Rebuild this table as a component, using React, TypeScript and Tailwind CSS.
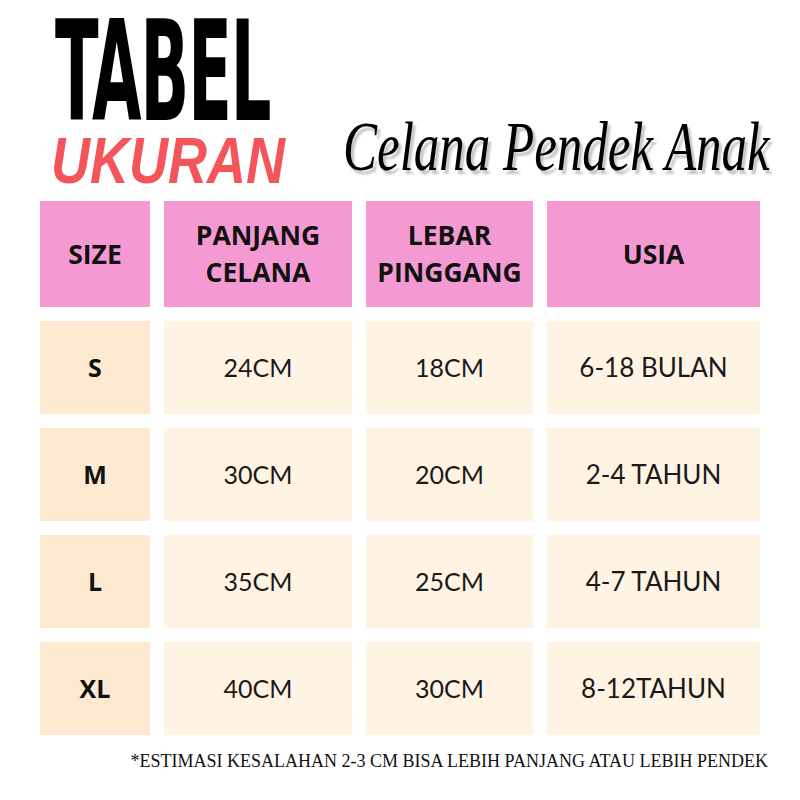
import React from 'react';

const rows = [
  { size: 'S', panjang: '24CM', lebar: '18CM', usia: '6-18 BULAN' },
  { size: 'M', panjang: '30CM', lebar: '20CM', usia: '2-4 TAHUN' },
  { size: 'L', panjang: '35CM', lebar: '25CM', usia: '4-7 TAHUN' },
  { size: 'XL', panjang: '40CM', lebar: '30CM', usia: '8-12TAHUN' },
];

const headers = ['SIZE', 'PANJANG\nCELANA', 'LEBAR\nPINGGANG', 'USIA'];

export default function App() {
  return (
    <div className="w-[800px] h-[800px] bg-white overflow-hidden">
      {/* title */}
      <div className="h-[201px] flex">
        <div className="pl-[55px] pt-[2px] w-[300px]">
          <div className="font-['Liberation_Sans_Narrow','DejaVu_Sans_Condensed',sans-serif] text-[71px] leading-none font-bold text-black origin-top-left scale-y-[1.97] tracking-[-1px]">
            TABEL
          </div>
          <div className="mt-[55px] font-['Liberation_Sans',Arial,sans-serif] text-[54px] leading-none font-bold italic text-[#f4555b] origin-top-left scale-y-[1.2] -ml-[4px]">
            UKURAN
          </div>
        </div>
        <div className="pt-[113px] pl-[43px]">
          <div className="font-['Liberation_Serif','DejaVu_Serif',serif] text-[51px] leading-none italic text-black whitespace-nowrap origin-top-left scale-y-[1.35] [text-shadow:3px_3px_2px_#c4c4c4]">
            Celana Pendek Anak
          </div>
        </div>
      </div>

      {/* table */}
      <div className="ml-[40px] grid grid-cols-[110px_188px_167px_213px] grid-rows-[106px_93px_93px_93px_93px] gap-x-[14px] gap-y-[14px]">
        {headers.map((h) => (
          <div
            key={h}
            className="bg-[#f599d3] flex items-center justify-center text-center whitespace-pre-line font-['Open_Sans',sans-serif] text-[26.5px] leading-[37px] font-bold text-[#111]"
          >
            {h}
          </div>
        ))}
        {rows.map((r) => (
          <React.Fragment key={r.size}>
            <div className="bg-[#fde9cf] flex items-center justify-center font-['Open_Sans',sans-serif] text-[25px] font-bold text-[#111]">
              {r.size}
            </div>
            <div className="bg-[#fff3e3] flex items-center justify-center font-['Lato',sans-serif] text-[25px] text-[#1a1a1a]">
              {r.panjang}
            </div>
            <div className="bg-[#fff3e3] flex items-center justify-center font-['Lato',sans-serif] text-[25px] text-[#1a1a1a]">
              {r.lebar}
            </div>
            <div className="bg-[#fff3e3] flex items-center justify-center font-['Lato',sans-serif] text-[26px] text-[#1a1a1a]">
              {r.usia}
            </div>
          </React.Fragment>
        ))}
      </div>

      {/* note */}
      <div className="mt-[17px] pr-[32px] text-right font-['Liberation_Serif','DejaVu_Serif',serif] text-[18px] leading-none text-[#111] whitespace-nowrap">
        *ESTIMASI KESALAHAN 2-3 CM BISA LEBIH PANJANG ATAU LEBIH PENDEK
      </div>
    </div>
  );
}
